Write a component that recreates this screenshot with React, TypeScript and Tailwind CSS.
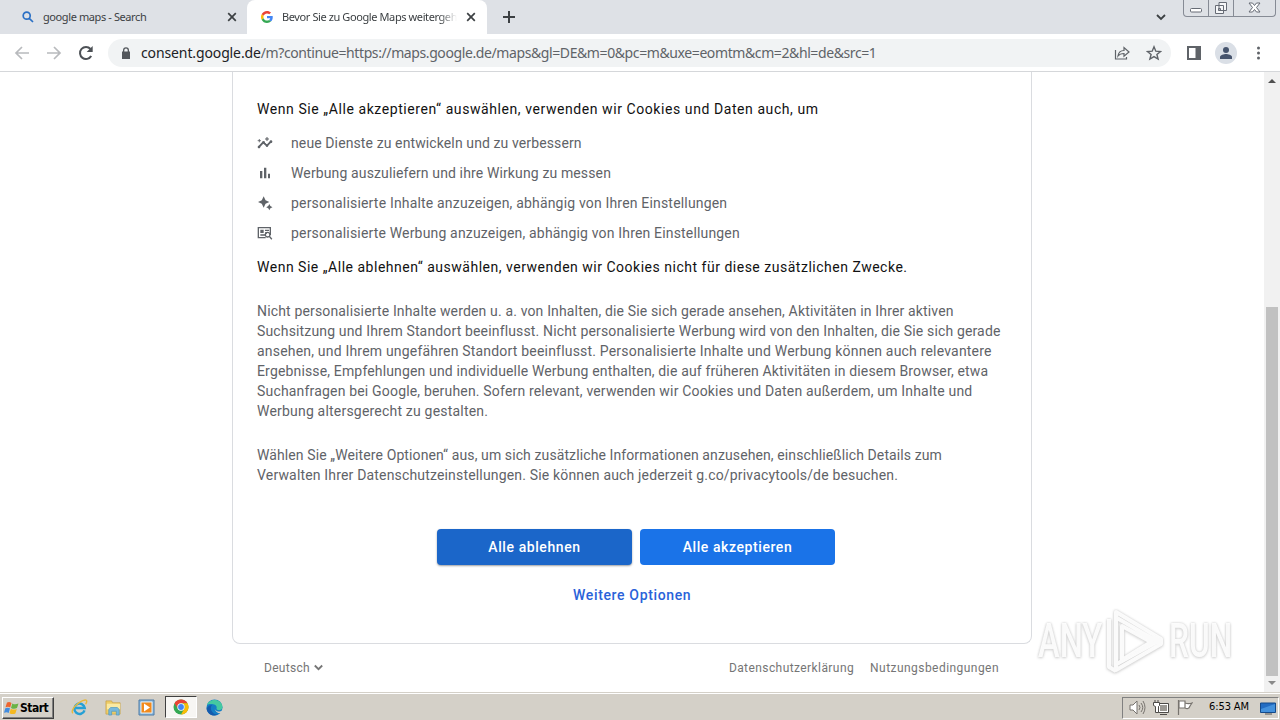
import type { ReactNode } from 'react';

const purposes = [
    { icon: 'insights', text: 'neue Dienste zu entwickeln und zu verbessern', tracking: 'tracking-[0.11px]' },
    { icon: 'bars', text: 'Werbung auszuliefern und ihre Wirkung zu messen', tracking: 'tracking-[0.13px]' },
    { icon: 'sparkle', text: 'personalisierte Inhalte anzuzeigen, abhängig von Ihren Einstellungen', tracking: 'tracking-[0.18px]' },
    { icon: 'ads', text: 'personalisierte Werbung anzuzeigen, abhängig von Ihren Einstellungen', tracking: 'tracking-[0.17px]' },
];

const details = [
    { text: 'Nicht personalisierte Inhalte werden u. a. von Inhalten, die Sie sich gerade ansehen, Aktivitäten in Ihrer aktiven', tracking: 'tracking-[0.155px]' },
    { text: 'Suchsitzung und Ihrem Standort beeinflusst. Nicht personalisierte Werbung wird von den Inhalten, die Sie sich gerade', tracking: 'tracking-[0.15px]' },
    { text: 'ansehen, und Ihrem ungefähren Standort beeinflusst. Personalisierte Inhalte und Werbung können auch relevantere', tracking: 'tracking-[0.195px]' },
    { text: 'Ergebnisse, Empfehlungen und individuelle Werbung enthalten, die auf früheren Aktivitäten in diesem Browser, etwa', tracking: 'tracking-[0.155px]' },
    { text: 'Suchanfragen bei Google, beruhen. Sofern relevant, verwenden wir Cookies und Daten außerdem, um Inhalte und', tracking: 'tracking-[0.18px]' },
    { text: 'Werbung altersgerecht zu gestalten.', tracking: 'tracking-[0.2px]' },
];

const options = [
    { text: 'Wählen Sie „Weitere Optionen“ aus, um sich zusätzliche Informationen anzusehen, einschließlich Details zum', tracking: 'tracking-[0.105px]' },
    { text: 'Verwalten Ihrer Datenschutzeinstellungen. Sie können auch jederzeit g.co/privacytools/de besuchen.', tracking: 'tracking-[0.17px]' },
];

function Icon({ children, className = 'size-4', box = 24 }: { children: ReactNode; className?: string; box?: number }) {
    return (
        <svg className={`shrink-0 ${className}`} viewBox={`0 0 ${box} ${box}`} fill="currentColor">
            {children}
        </svg>
    );
}

function PurposeIcon({ name }: { name: string }) {
    return (
        <Icon className="size-4 text-[#5f6368]">
            {name === 'insights' && (
                <>
                    <path d="M2.500 18l6.500-7 6 5L21.500 9" fill="none" stroke="currentColor" strokeWidth="2.600" />
                    <path d="M21 8c-1.45 0-2.26 1.44-1.93 2.51l-3.55 3.56c-.3-.09-.74-.09-1.04 0l-2.55-2.55C12.27 10.45 11.46 9 10 9c-1.45 0-2.27 1.44-1.93 2.52l-4.56 4.55C2.44 15.74 1 16.55 1 18c0 1.1.9 2 2 2 1.45 0 2.26-1.44 1.93-2.51l4.55-4.56c.3.09.74.09 1.04 0l2.55 2.55C12.73 16.55 13.54 18 15 18c1.45 0 2.27-1.44 1.93-2.52l3.56-3.55C21.56 12.26 23 11.45 23 10c0-1.1-.9-2-2-2z" />
                    <path d="M15 9l.94-2.07L18 6l-2.06-.93L15 3l-.92 2.07L12 6l2.08.93zM3.500 11L4 9l2-.5L4 8l-.5-2L3 8l-2 .5L3 9z" stroke="currentColor" strokeWidth=".6" />
                </>
            )}
            {name === 'bars' && <path d="M4.500 9H8v11H4.500zM10.500 4H14v16h-3.500zM16.500 13h3v7h-3z" />}
            {name === 'sparkle' && (
                <path d="M10 2l2.800 5.700L18.500 10.500l-5.700 2.800L10 19l-2.800-5.700L1.500 10.500l5.700-2.800zM18.500 13.500l1.600 3.100 3.100 1.600-3.100 1.600-1.600 3.100-1.600-3.100-3.100-1.600 3.100-1.600z" />
            )}
            {name === 'ads' && (
                <>
                    <path fillRule="evenodd" d="M1 3h20v12h-2V5H3v13h10v2H1zM5 7h5v5H5zM12 7h6v2h-6zM12 11h3v2h-3zM5 14h7v2H5z" />
                    <path fillRule="evenodd" d="M16 10a4.500 4.500 0 0 1 3.800 6.900L23 20.500 21.500 22l-3.200-3.600A4.500 4.500 0 1 1 16 10zm0 2a2.500 2.500 0 1 0 0 5 2.500 2.500 0 0 0 0-5z" />
                </>
            )}
        </Icon>
    );
}

function GoogleLogo() {
    return (
        <Icon className="size-3" box={48}>
            <path fill="#EA4335" d="M24 9.500c3.540 0 6.710 1.220 9.210 3.600l6.850-6.850C35.900 2.380 30.470 0 24 0 14.620 0 6.510 5.380 2.560 13.220l7.980 6.190C12.430 13.720 17.740 9.500 24 9.500z" />
            <path fill="#4285F4" d="M46.980 24.550c0-1.570-.15-3.090-.38-4.550H24v9.020h12.940c-.58 2.960-2.260 5.480-4.780 7.180l7.730 6c4.510-4.180 7.090-10.360 7.090-17.650z" />
            <path fill="#FBBC05" d="M10.530 28.590c-.48-1.450-.76-2.990-.76-4.590s.27-3.140.76-4.590l-7.980-6.190C.92 16.460 0 20.120 0 24c0 3.880.92 7.540 2.560 10.780l7.970-6.190z" />
            <path fill="#34A853" d="M24 48c6.480 0 11.930-2.130 15.890-5.810l-7.730-6c-2.150 1.450-4.920 2.300-8.160 2.300-6.260 0-11.570-4.220-13.470-9.910l-7.980 6.190C6.510 42.620 14.620 48 24 48z" />
        </Icon>
    );
}

function CloseIcon() {
    return (
        <Icon className="size-2.5 text-[#3c4043]" box={10}>
            <path d="M1.200 1.200l7.600 7.600M8.800 1.200L1.200 8.800" stroke="currentColor" strokeWidth="1.700" />
        </Icon>
    );
}

function TabStrip() {
    return (
        <div className="flex h-[34px] bg-[#dee1e6] font-['Noto_Sans',sans-serif] text-[11px] text-[#3c4043]">
            <div className="flex w-[247px] items-center pl-[22px]">
                <Icon className="size-3 text-[#2b70c5]" box={12}>
                    <path fill="none" stroke="currentColor" strokeWidth="1.700" d="M8.200 4.700a3.500 3.500 0 1 1-7 0 3.500 3.500 0 0 1 7 0zM7.300 7.300l3.700 3.700" />
                </Icon>
                <span className="ml-[9px] w-[184px] whitespace-nowrap tracking-[-0.4px]">google maps - Search</span>
                <CloseIcon />
            </div>
            <div className="flex w-[240px] items-center rounded-t-lg bg-white pl-3.5">
                <GoogleLogo />
                <span className="mr-[9px] ml-[9px] w-[175px] overflow-hidden whitespace-nowrap tracking-[-0.4px] [mask-image:linear-gradient(to_right,black_90%,transparent)]">
                    Bevor Sie zu Google Maps weitergehen
                </span>
                <CloseIcon />
            </div>
            <div className="flex items-center pl-4">
                <Icon className="size-3" box={12}>
                    <path d="M6 0v12M0 6h12" stroke="currentColor" strokeWidth="2" />
                </Icon>
            </div>
            <div className="ml-auto flex">
                <Icon className="mt-3 mr-[17px] size-[10px]" box={10}>
                    <path d="M1 3l4 4 4-4" fill="none" stroke="currentColor" strokeWidth="1.800" />
                </Icon>
                <div className="mr-1 flex h-[17px] w-[93px] rounded-b border border-t-0 border-[#868b95] text-[#666b75]">
                    <div className="flex w-[25px] justify-center border-r border-[#868b95]">
                        <Icon className="size-[14px]" box={14}>
                            <rect x="1.500" y="8.500" width="11" height="3.500" rx="1" fill="#fff" stroke="currentColor" />
                        </Icon>
                    </div>
                    <div className="flex w-[25px] justify-center border-r border-[#868b95]">
                        <Icon className="mt-px size-[14px]" box={14}>
                            <path d="M5 1.500h7.500v8H5zM1.500 4.500h8v8h-8zM4.500 7.500h2v2h-2z" fill="#f5f6f8" stroke="currentColor" />
                        </Icon>
                    </div>
                    <div className="flex flex-1 justify-center">
                        <Icon className="mt-px size-[13px]" box={13}>
                            <path d="M1 2h3.500l2 2.500 2-2.500H12L8.500 6.500 12 11H8.500l-2-2.500-2 2.500H1l3.500-4.500z" fill="#fff" stroke="currentColor" />
                        </Icon>
                    </div>
                </div>
            </div>
        </div>
    );
}

function Toolbar() {
    return (
        <div className="flex h-[38px] items-center border-b border-[#d5d7da] bg-white text-[#5f6368]">
            <div className="flex w-[108px] items-center gap-4 pl-3.5">
                <Icon className="size-4 text-[#b8babd]" box={16}>
                    <path d="M15 8H2M8 2L2 8l6 6" fill="none" stroke="currentColor" strokeWidth="1.700" />
                </Icon>
                <Icon className="size-4 text-[#b8babd]" box={16}>
                    <path d="M1 8h13M8 2l6 6-6 6" fill="none" stroke="currentColor" strokeWidth="1.700" />
                </Icon>
                <Icon className="size-4 text-[#4d5156]" box={16}>
                    <path d="M13.200 11A6 6 0 1 1 12.500 4" fill="none" stroke="currentColor" strokeWidth="2" />
                    <path d="M14.700 1v6H8.700z" />
                </Icon>
            </div>
            <div className="flex h-7 w-[1063px] items-center rounded-full bg-[#f1f3f4] pl-3">
                <Icon className="h-3 w-3 text-[#54585d]" box={12}>
                    <path fillRule="evenodd" d="M3 4.500V3.300a3 3 0 0 1 6 0v1.200h1V12H2V4.500zm1.300 0h3.400V3.300a1.700 1.700 0 0 0-3.400 0z" />
                </Icon>
                <span className="ml-[9px] flex-1 whitespace-nowrap font-['Noto_Sans',sans-serif] text-sm tracking-[-0.35px]">
                    <span className="tracking-[-0.12px] text-[#202124]">consent.google.de</span>
                    <span className="tracking-[-0.4px]">/m?continue=https://maps.google.de/maps&amp;gl=DE&amp;m=0&amp;pc=m&amp;uxe=eomtm&amp;cm=2&amp;hl=de&amp;src=1</span>
                </span>
                <Icon className="mr-4 size-4" box={16}>
                    <path d="M1.500 5v9h11v-2M4 11c.5-4 2.500-5.500 6-5.500v-3L15 7l-5 4.300V8.500c-3 0-4.500.5-6 2.500z" fill="none" stroke="currentColor" strokeWidth="1.200" />
                </Icon>
                <Icon className="mr-[9px] size-4" box={16}>
                    <path d="M8 1.800l1.800 4.400 4.700.3-3.600 3 1.200 4.600L8 11.600l-4.100 2.500 1.200-4.600-3.600-3 4.700-.3z" fill="none" stroke="currentColor" strokeWidth="1.400" />
                </Icon>
            </div>
            <Icon className="ml-[15px] size-4" box={16}>
                <path fillRule="evenodd" d="M1 1h14v14H1zM3 3v10h6.500V3z" />
            </Icon>
            <div className="ml-[13px] flex size-[22px] items-center justify-center rounded-full bg-[#dadfe6]">
                <Icon className="size-[14px] text-[#46546d]" box={14}>
                    <circle cx="7" cy="4" r="3" />
                    <path d="M1 13v-2c0-2 4-3 6-3s6 1 6 3v2z" />
                </Icon>
            </div>
            <Icon className="ml-[13px] size-4" box={16}>
                <circle cx="8.500" cy="3" r="1.500" />
                <circle cx="8.500" cy="8" r="1.500" />
                <circle cx="8.500" cy="13" r="1.500" />
            </Icon>
        </div>
    );
}

function ConsentCard() {
    return (
        <div className="h-[572px] w-[800px] rounded-b-lg border border-t-0 border-[#dadce0] px-6 pt-[27px] text-sm/5 whitespace-nowrap text-[#5f6368]">
            <p className="tracking-[0.575px] text-[#111]">Wenn Sie „Alle akzeptieren“ auswählen, verwenden wir Cookies und Daten auch, um</p>
            <ul className="mt-[9px]">
                {purposes.map((p) => (
                    <li key={p.icon} className="flex h-[30px] items-center gap-[18px]">
                        <PurposeIcon name={p.icon} />
                        <span className={p.tracking}>{p.text}</span>
                    </li>
                ))}
            </ul>
            <p className="mt-[9px] tracking-[0.51px] text-[#111]">Wenn Sie „Alle ablehnen“ auswählen, verwenden wir Cookies nicht für diese zusätzlichen Zwecke.</p>
            <p className="mt-6 flex flex-col items-start">
                {details.map((line) => (
                    <span key={line.text} className={line.tracking}>{line.text}</span>
                ))}
            </p>
            <p className="mt-6 flex flex-col items-start">
                {options.map((line) => (
                    <span key={line.text} className={line.tracking}>{line.text}</span>
                ))}
            </p>
            <div className="mt-11 flex gap-2 pl-[180px] font-medium tracking-[0.58px] text-white">
                <button className="h-9 w-[195px] rounded bg-[#1b66c9] shadow-[0_1px_2px_#3c404380]">Alle ablehnen</button>
                <button className="h-9 w-[195px] rounded bg-[#1a73e8]">Alle akzeptieren</button>
            </div>
            <div className="mt-3 flex h-9 items-center pl-[316px] font-medium tracking-[0.65px] text-[#2962d9]">Weitere Optionen</div>
        </div>
    );
}

function Watermark() {
    return (
        <div className="absolute top-[537px] left-[1038px] flex h-16 items-center font-['Roboto',sans-serif] text-[48px] text-white/90 [filter:drop-shadow(0_0_1px_#ccc)_drop-shadow(0_1px_1px_#ddd)]">
            <span className="w-[69px]"><span className="inline-block origin-left scale-x-[0.68] font-medium">ANY</span></span>
            <svg className="h-16 w-[58px]" viewBox="0 0 58 64" fill="none" stroke="currentColor" strokeWidth="4">
                <path d="M9 3L54 30v5L9 61zM9 3v58M2 10v48l7 4M15 17l29 16-29 18zM10 9l43 25M8 56l45-25" strokeLinejoin="round" />
            </svg>
            <span className="ml-1 w-[66px]"><span className="inline-block origin-left scale-x-[0.66] font-medium">RUN</span></span>
        </div>
    );
}

function Taskbar() {
    return (
        <div className="flex h-7 items-center border-t border-[#d4d0c8] bg-[#d4d0c8] font-['DejaVu_Sans_Condensed','DejaVu_Sans',sans-serif] text-[11px] text-black shadow-[inset_0_1px_#fff]">
            <div className="mt-0.5 ml-0.5 flex h-[22px] w-[52px] items-center border border-t-white border-r-[#404040] border-b-[#404040] border-l-white pl-px text-xs font-bold tracking-[-0.5px] shadow-[inset_-1px_-1px_#808080]">
                <Icon className="size-4" box={16}>
                    <path fill="#ee642e" d="M3 2.500C5 1.500 6 2 7.500 3L6.200 7.500C4.700 6.500 3.500 6.500 1.500 7.300z" />
                    <path fill="#69b345" d="M8.300 3.400c2 1.200 3.800 1 6.200 0L13 8c-2 1-4 1-6-.1z" />
                    <path fill="#418ce0" d="M1.300 8.200c2-.8 3.300-.7 4.700.1L4.700 13C3.300 12 2 12 0 12.800z" />
                    <path fill="#f5b921" d="M6.800 8.700c2 1.100 4 1.100 6 .2l-1.400 4.500c-2 1-4 .8-5.900-.2z" />
                </Icon>
                Start
            </div>
            <div className="mt-px ml-[17px] flex items-center">
                <Icon className="size-[17px]" box={18}>
                    <path d="M14.300 12A5.500 5.500 0 1 1 14.500 9.500H5" fill="none" stroke="#25a0d5" strokeWidth="2.600" />
                    <path d="M2 15C-1 12 8 2 15 1c3 0 1 3.500.5 4.500" fill="none" stroke="#e7b93c" strokeWidth="1.500" />
                </Icon>
                <Icon className="ml-[17px] size-[17px]" box={18}>
                    <path fill="#edcc68" stroke="#c69d3f" strokeWidth=".7" d="M1 2h6l1 2h8v12H1z" />
                    <path fill="#fae9a4" d="M2 5h14v6H2z" />
                    <path fill="#78b8dc" stroke="#4b98c0" strokeWidth=".7" d="M4 11l2-2h7l2 2v6h-3v-4H7v4H4z" />
                </Icon>
                <Icon className="ml-4 size-[17px]" box={17}>
                    <path fill="#8bb9dd" stroke="#4c7ba6" d="M1 1h15v15H1z" />
                    <path fill="#f28a1c" stroke="#e4eef4" d="M3 3h11v11H3z" />
                    <path fill="#fff" d="M6 4.500l6 4-6 4z" />
                </Icon>
                <div className="ml-2.5 flex h-[22px] w-8 items-center justify-center border border-t-[#404040] border-r-white border-b-white border-l-[#404040] bg-[#f7f6f3]">
                    <Icon className="size-4" box={16}>
                        <circle cx="8" cy="8" r="7.500" fill="#34a853" />
                        <path fill="#ea4335" d="M1.500 4.250A7.500 7.500 0 0 1 14.500 4.250H8A3.750 3.750 0 0 0 4.750 9.870z" />
                        <path fill="#fbbc05" d="M14.500 4.250A7.500 7.500 0 0 1 8 15.500l3.250-5.630A3.750 3.750 0 0 0 8 4.250z" />
                        <circle cx="8" cy="8" r="3.700" fill="#fff" />
                        <circle cx="8" cy="8" r="2.900" fill="#4285f4" />
                    </Icon>
                </div>
                <Icon className="ml-[9px] size-[17px]" box={17}>
                    <circle cx="8.500" cy="8.500" r="8" fill="#147ec5" />
                    <path fill="#45c9a1" d="M1 6C3-1 16-1 16.500 8c0 4-6 4-6 1.500C12 5 4 4 1 6z" />
                    <path fill="#155bad" d="M6 6c-3 3 0 10 6 9.500-5 3-11-.5-11.500-6C2 7 4 6 6 6z" />
                    <path fill="#d4d0c8" d="M9 8c-1 3 2 5 5 4.500l3-1.500v3l-2 .5c-4 0-7-3-6-6.500z" />
                </Icon>
            </div>
            <div className="mt-0.5 mr-px ml-auto flex h-[22px] w-[157px] items-center border border-t-[#808080] border-r-white border-b-white border-l-[#808080] pl-1.5 text-[#77736e]">
                <Icon className="size-[17px]" box={17}>
                    <path d="M1 6h3l4-4v13l-4-4H1z" fill="#fff" stroke="currentColor" />
                    <path d="M10 6q2 2.500 0 5M12 4q3.500 4.500 0 9M14 2q4 6.500 0 13" fill="none" stroke="currentColor" />
                </Icon>
                <Icon className="ml-[7px] size-[17px]" box={17}>
                    <path d="M5.500 4.500h10v9h-10z" fill="#fff" stroke="#4d4b48" />
                    <path d="M7 6h7v6H7z" fill="#9b9893" />
                    <path d="M7 15.500h7M2 1v3M5 1v3M.5 3.500h6v3l-1 1v6h-3v-6l-2-1z" fill="#fff" stroke="#4d4b48" />
                </Icon>
                <Icon className="ml-[6px] size-[17px]" box={17}>
                    <path d="M2.500 1v15M3 2h6v7H3zM9 4c3 1 4 1 7 0l-2 3c-1 3-3 3-5 2" fill="#fff" stroke="currentColor" strokeWidth="1.200" />
                </Icon>
                <span className="ml-[16px] w-[52px] whitespace-nowrap tracking-[-0.1px] text-black">6:53 AM</span>
                <Icon className="-ml-px size-4" box={16}>
                    <path d="M.5 3h15v9.500H.5z" fill="#236cc2" stroke="#144a8a" />
                    <path d="M1 9L15 4v8H1z" fill="#4491dc" />
                    <path d="M5 14h7" stroke="#555" />
                </Icon>
            </div>
        </div>
    );
}

export default function App() {
    return (
        <div className="flex h-[720px] w-[1280px] flex-col overflow-hidden bg-white font-['Roboto',sans-serif]">
            <TabStrip />
            <Toolbar />
            <div className="relative flex h-[620px]">
                <main className="flex-1 pl-[232px]">
                    <ConsentCard />
                    <footer className="flex h-[47px] w-[800px] items-center pl-8 text-xs tracking-[0.3px] whitespace-nowrap text-[#757575]">
                        <span>Deutsch</span>
                        <Icon className="ml-1 size-[9px]" box={9}>
                            <path d="M.8 2.500l3.700 3.700 3.700-3.700" fill="none" stroke="currentColor" strokeWidth="1.800" />
                        </Icon>
                        <span className="mr-4 ml-auto tracking-[0.42px]">Datenschutzerklärung</span>
                        <span className="mr-[33px] tracking-[0.45px]">Nutzungsbedingungen</span>
                    </footer>
                </main>
                <div className="flex w-4 flex-col items-center bg-[#f1f1f1]">
                    <Icon className="mt-px size-4 text-[#505050]" box={16}><path d="M4 10l4-4 4 4z" /></Icon>
                    <div className="mt-[218px] h-[369px] w-3 bg-[#c1c1c1]" />
                    <Icon className="size-4 text-[#8a8a8a]" box={16}><path d="M4 5l4 4 4-4z" /></Icon>
                </div>
                <Watermark />
            </div>
            <Taskbar />
        </div>
    );
}
